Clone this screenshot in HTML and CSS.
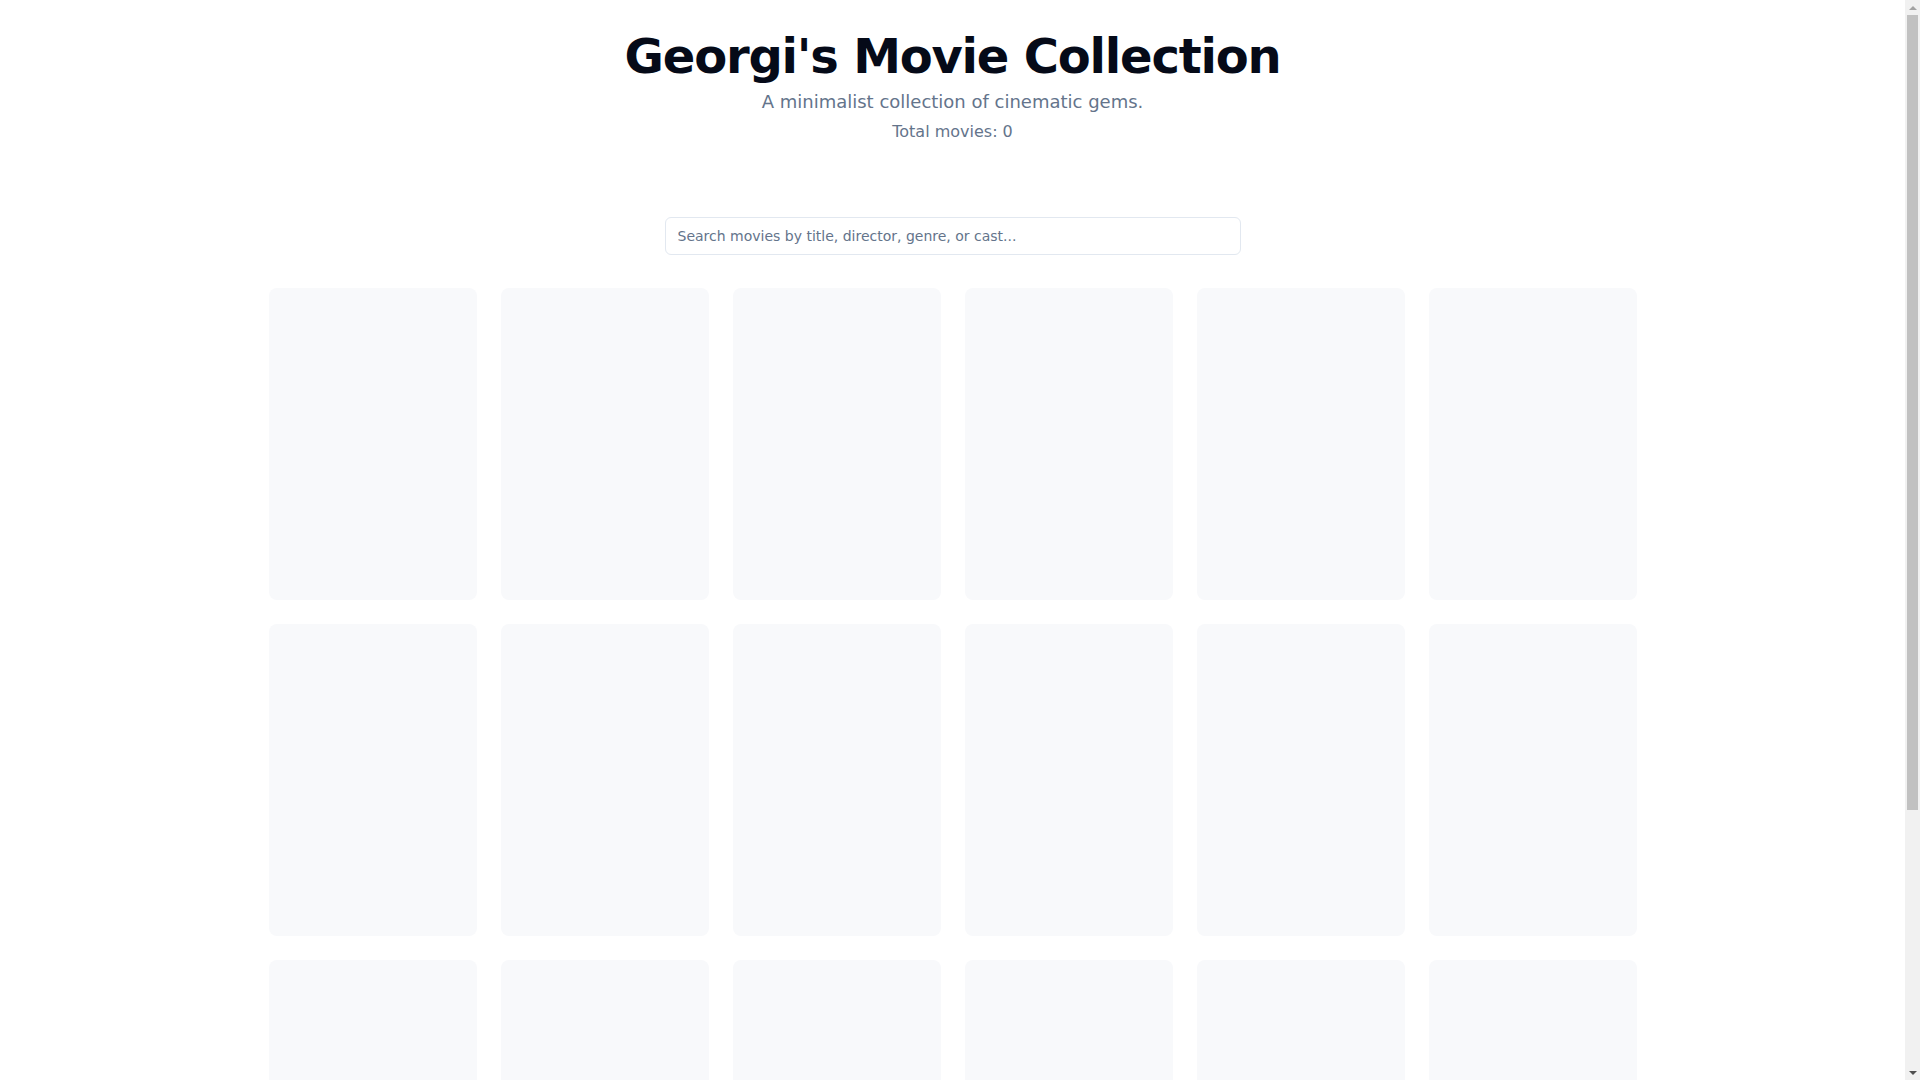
FILE: index.html
```html
<!DOCTYPE html>
<html lang="en">
<head>
<meta charset="utf-8">
<title>Georgi's Movie Collection</title>
<link rel="stylesheet" href="styles.css">
</head>
<body>
<div class="page">
  <header class="header">
    <h1 class="title">Georgi's Movie Collection</h1>
    <p class="subtitle">A minimalist collection of cinematic gems.</p>
    <p class="count">Total movies: 0</p>
  </header>
  <div class="search-wrap">
    <input class="search" type="text" placeholder="Search movies by title, director, genre, or cast...">
  </div>
  <main class="grid">
    <div class="card"></div><div class="card"></div><div class="card"></div>
    <div class="card"></div><div class="card"></div><div class="card"></div>
    <div class="card"></div><div class="card"></div><div class="card"></div>
    <div class="card"></div><div class="card"></div><div class="card"></div>
    <div class="card"></div><div class="card"></div><div class="card"></div>
    <div class="card"></div><div class="card"></div><div class="card"></div>
  </main>
</div>
<div class="scrollbar" aria-hidden="true">
  <div class="sb-btn"><span class="sb-up"></span></div>
  <div class="sb-track"><div class="sb-thumb"></div></div>
  <div class="sb-btn"><span class="sb-down"></span></div>
</div>
</body>
</html>
```

FILE: styles.css
```css
* { box-sizing: border-box; }
html {
  margin: 0;
  padding: 0;
  background: #ffffff;
}
body {
  margin: 0;
  padding: 0 15px 0 0;
  font-family: "DejaVu Sans", sans-serif;
  color: #020617;
}
.page {
  max-width: 1400px;
  margin: 0 auto;
  padding: 32px 16px 154px;
}
.header {
  text-align: center;
}
.title {
  margin: 0;
  font-size: 48px;
  line-height: 48px;
  font-weight: 700;
  letter-spacing: -0.025em;
  color: #050a18;
}
.subtitle {
  margin: 8px 0 0;
  font-size: 18px;
  line-height: 28px;
  color: #64748b;
}
.count {
  margin: 4px 0 0;
  font-size: 16px;
  line-height: 24px;
  color: #64748b;
}
.search-wrap {
  display: flex;
  justify-content: center;
  margin-top: 73px;
  margin-bottom: 33px;
}
.search {
  width: 576px;
  height: 38px;
  padding: 8px 12px;
  border: 1px solid #e2e8f0;
  border-radius: 6px;
  font-family: "DejaVu Sans", sans-serif;
  font-size: 14px;
  line-height: 20px;
  color: #0f172a;
  background: #ffffff;
  outline: none;
}
.search::placeholder { color: #64748b; }
.grid {
  display: grid;
  grid-template-columns: repeat(6, 1fr);
  gap: 24px;
}
.card {
  aspect-ratio: 2 / 3;
  background: #f8f9fb;
  border-radius: 8px;
}

/* emulated browser scrollbar */
.scrollbar {
  position: fixed;
  top: 0;
  right: 0;
  width: 15px;
  height: 100vh;
  background: #f1f1f1;
  display: flex;
  flex-direction: column;
}
.sb-btn {
  height: 15px;
  flex: none;
  display: flex;
  align-items: center;
  justify-content: center;
}
.sb-up {
  width: 0;
  height: 0;
  border-left: 4px solid transparent;
  border-right: 4px solid transparent;
  border-bottom: 4px solid #a3a3a3;
}
.sb-down {
  width: 0;
  height: 0;
  border-left: 4px solid transparent;
  border-right: 4px solid transparent;
  border-top: 4px solid #505050;
}
.sb-track {
  flex: 1;
  padding: 0 2px;
}
.sb-thumb {
  height: 75.7%;
  background: #c1c1c1;
}
```
